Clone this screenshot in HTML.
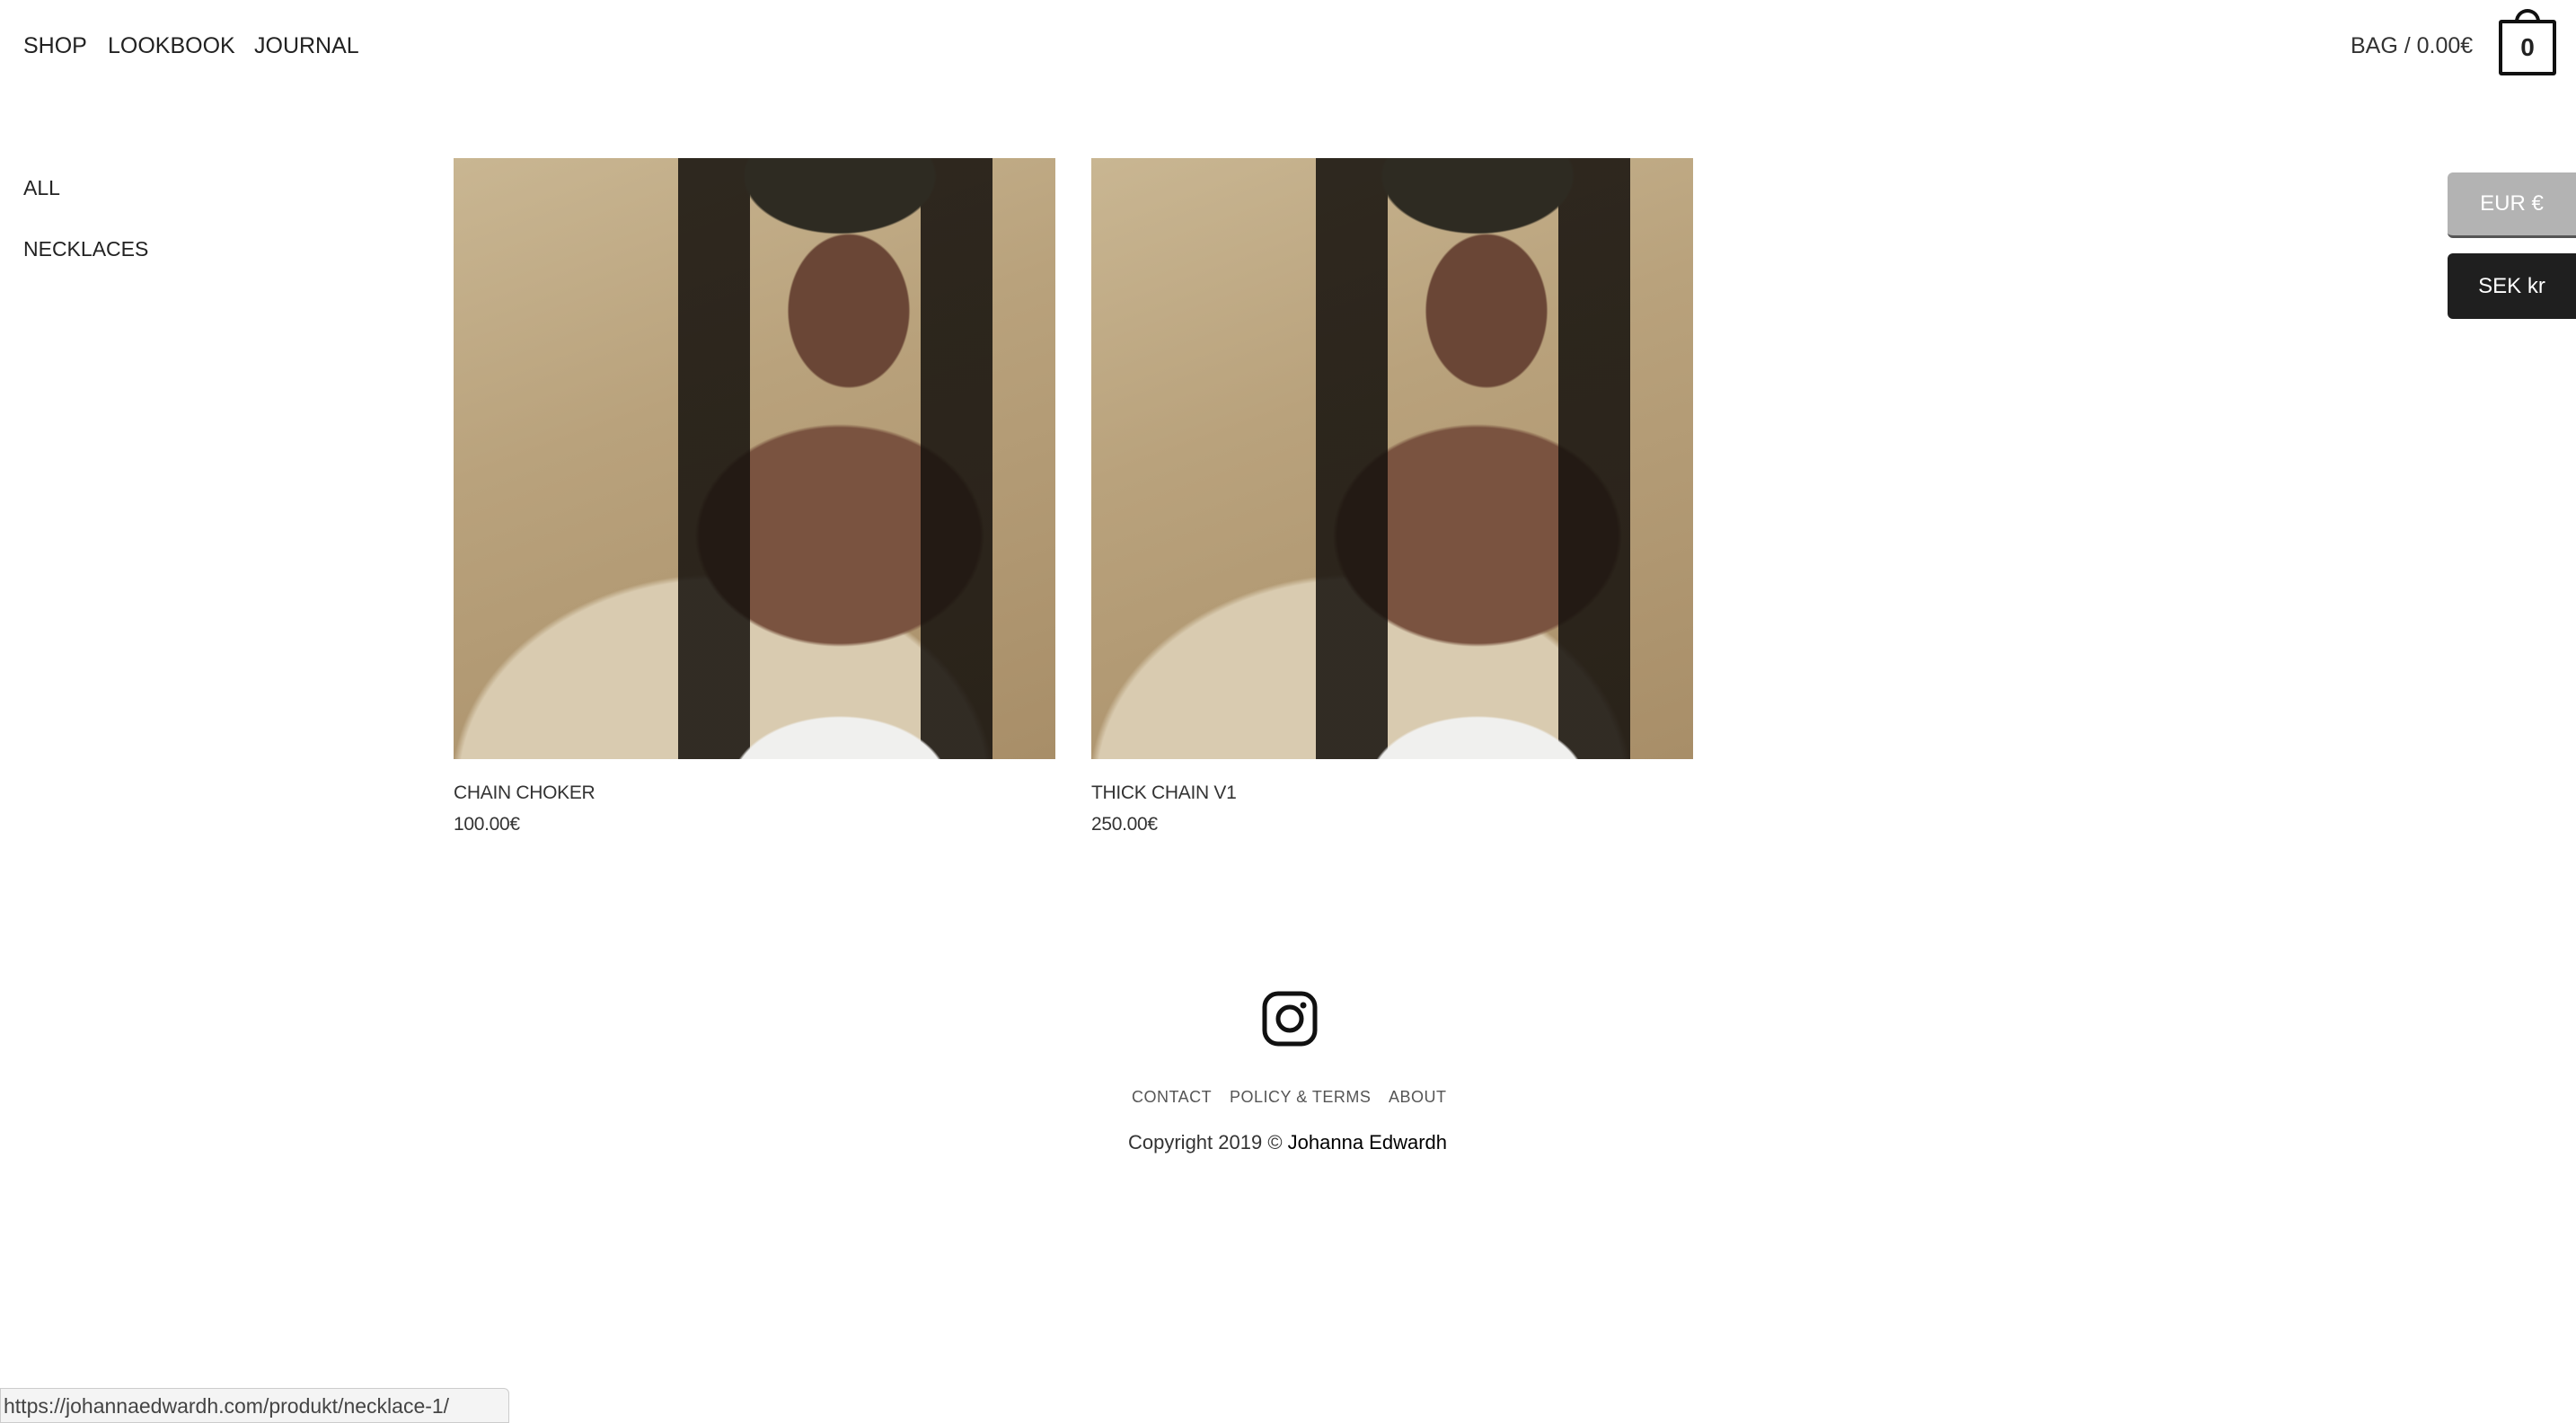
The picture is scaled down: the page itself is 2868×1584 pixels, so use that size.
<!DOCTYPE html>
<html><head><meta charset="utf-8"><style>
*{margin:0;padding:0;box-sizing:border-box}
body{width:2868px;height:1584px;background:#fff;font-family:"Liberation Sans",sans-serif;color:#222;position:relative;overflow:hidden}
.a{position:absolute;white-space:nowrap}
.nav{font-size:25px;top:37px}
.img{position:absolute;top:176px;width:670px;height:669px;overflow:hidden;
background:
radial-gradient(ellipse 150px 90px at 430px 20px,#2e2b22 70%,transparent 72%),
radial-gradient(ellipse 95px 120px at 440px 170px,#6a4636 70%,transparent 72%),
radial-gradient(ellipse 170px 110px at 430px 700px,#f0f0ee 70%,transparent 72%),
linear-gradient(90deg,transparent 0,transparent 250px,rgba(20,16,12,.85) 250px,rgba(20,16,12,.85) 330px,transparent 330px,transparent 520px,rgba(20,16,12,.85) 520px,rgba(20,16,12,.85) 600px,transparent 600px),
radial-gradient(ellipse 260px 200px at 430px 420px,#7a5340 60%,transparent 62%),
radial-gradient(ellipse 420px 330px at 300px 700px,#d9cbb0 70%,transparent 72%),
linear-gradient(160deg,#c9b692 0%,#b9a27c 40%,#a88e68 100%)}
.t{font-size:21px;color:#333;letter-spacing:-.3px}
.cur{position:absolute;left:2725px;width:143px;height:73px;font-size:24px;display:flex;align-items:center;justify-content:center;border-radius:6px 0 0 6px}
.f{font-size:18px;color:#555;letter-spacing:.5px;top:1211px}
</style></head><body>
<div class="a nav" style="left:26px">SHOP</div>
<div class="a nav" style="left:120px">LOOKBOOK</div>
<div class="a nav" style="left:283px">JOURNAL</div>
<div class="a nav" style="left:2617px;color:#333">BAG / 0.00€</div>
<div class="a" style="left:2782px;top:22px;width:64px;height:62px;border:4px solid #111;border-radius:3px;font-size:28px;font-weight:bold;text-align:center;line-height:54px">0</div>
<div class="a" style="left:2800px;top:10px;width:28px;height:16px;border:4px solid #111;border-bottom:none;border-radius:14px 14px 0 0"></div>
<div class="a" style="left:26px;top:196px;font-size:23px">ALL</div>
<div class="a" style="left:26px;top:264px;font-size:23px">NECKLACES</div>
<div class="img" style="left:505px"></div>
<div class="img" style="left:1215px"></div>
<div class="a t" style="left:505px;top:871px">CHAIN CHOKER</div>
<div class="a t" style="left:505px;top:906px">100.00€</div>
<div class="a t" style="left:1215px;top:871px">THICK CHAIN V1</div>
<div class="a t" style="left:1215px;top:906px">250.00€</div>
<div class="cur" style="top:192px;background:#b3b3b3;color:#fff;border-bottom:3px solid #555">EUR €</div>
<div class="cur" style="top:282px;background:#1f1f1f;color:#fff">SEK kr</div>
<svg class="a" style="left:1405px;top:1103px" width="62" height="62" viewBox="0 0 62 62"><rect x="3" y="3" width="56" height="56" rx="15" fill="none" stroke="#111" stroke-width="5"/><circle cx="31" cy="31" r="13" fill="none" stroke="#111" stroke-width="5"/><circle cx="46" cy="16" r="3.5" fill="#111"/></svg>
<div class="a f" style="left:1260px">CONTACT</div>
<div class="a f" style="left:1369px">POLICY &amp; TERMS</div>
<div class="a f" style="left:1546px">ABOUT</div>
<div class="a" style="left:1256px;top:1259px;font-size:22px;color:#333">Copyright 2019 © <span style="color:#000">Johanna Edwardh</span></div>
<div class="a" style="left:0;top:1545px;width:567px;height:39px;background:#f4f4f4;border:1px solid #ccc;border-radius:0 6px 0 0;font-size:23px;color:#444;padding:6px 0 0 3px">https://johannaedwardh.com/produkt/necklace-1/</div>
</body></html>
